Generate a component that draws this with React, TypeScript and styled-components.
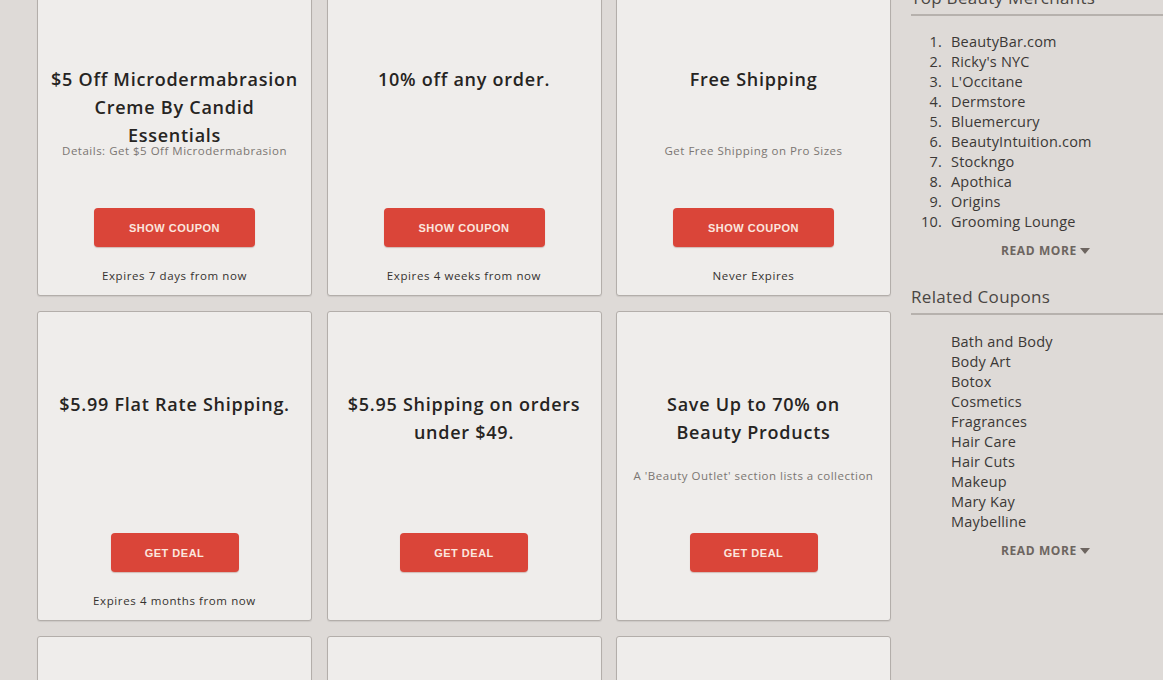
import React from "react";
import styled, { createGlobalStyle } from "styled-components";

const Global = createGlobalStyle`
  html, body { margin: 0; padding: 0; background: #dedad7; overflow: hidden; }
  body { font-family: "Open Sans", "Liberation Sans", sans-serif; }
`;

const Page = styled.div`
  display: flex;
  align-items: flex-start;
  gap: 20px;
  padding-left: 37px;
  margin-top: -14px;
  width: 1163px;
  box-sizing: border-box;
  height: 694px;
  overflow: hidden;
`;

const Grid = styled.div`
  display: grid;
  grid-template-columns: repeat(3, 275px);
  grid-auto-rows: 310px;
  column-gap: 14.5px;
  row-gap: 15px;
  flex: none;
`;

const Card = styled.div`
  box-sizing: border-box;
  background: #efedeb;
  border: 1px solid #b3aeaa;
  border-radius: 3px;
  box-shadow: 0 1px 1px rgba(0,0,0,0.08);
  display: flex;
  flex-direction: column;
  align-items: center;
  padding: 78px 4px 0;
  text-align: center;
`;

const Title = styled.div`
  height: 78px;
  font-size: 18px;
  line-height: 28px;
  font-weight: 600;
  color: #262422;
  letter-spacing: 0.75px;
  width: 100%;
  white-space: pre-line;
`;

const Details = styled.div`
  height: 65px;
  font-size: 11.5px;
  line-height: 16px;
  color: #7b7672;
  white-space: nowrap;
  letter-spacing: 0.5px;
`;

const Button = styled.div<{ $wide?: boolean }>`
  box-sizing: border-box;
  width: ${(p) => (p.$wide ? "161px" : "128px")};
  height: 39px;
  border-radius: 4px;
  background: #da4539;
  box-shadow: 0 1px 1px rgba(120,30,20,0.25);
  color: #fbe6df;
  font-family: "Liberation Sans", Arial, sans-serif;
  font-weight: 700;
  font-size: 11px;
  display: flex;
  align-items: center;
  justify-content: center;
  letter-spacing: 0.5px;
`;

const Expires = styled.div`
  margin-top: 21px;
  font-size: 11.5px;
  line-height: 16px;
  color: #35322f;
  letter-spacing: 0.6px;
`;

const Side = styled.div`
  flex: 1;
  display: flex;
  flex-direction: column;
`;

const SideHead = styled.div<{ $gap?: number }>`
  font-size: 17px;
  line-height: 24px;
  color: #4a4643;
  padding-bottom: 4px;
  border-bottom: 2px solid #b6b1ad;
  margin-top: ${(p) => p.$gap ?? 0}px;
  letter-spacing: 0.3px;
`;

const List = styled.div<{ $top: number }>`
  display: flex;
  flex-direction: column;
  margin-top: ${(p) => p.$top}px;
`;

const Item = styled.div`
  display: grid;
  grid-template-columns: 31px 1fr;
  column-gap: 9px;
  font-size: 14.5px;
  line-height: 20px;
  color: #3b3836;
  letter-spacing: 0.2px;
`;

const Num = styled.span`
  text-align: right;
`;

const ReadMore = styled.div`
  margin-top: 12px;
  padding-left: 90px;
  display: flex;
  align-items: center;
  gap: 3px;
  font-size: 12px;
  line-height: 14px;
  font-weight: 700;
  color: #6d6560;
  letter-spacing: 0.6px;
`;

const Tri = styled.span`
  width: 0;
  height: 0;
  border-left: 5px solid transparent;
  border-right: 5px solid transparent;
  border-top: 6px solid #6d6560;
`;

type C = { title: string; details?: string; btn: "coupon" | "deal"; expires?: string };

const cards: C[] = [
  { title: "$5 Off Microdermabrasion\nCreme By Candid\nEssentials", details: "Details: Get $5 Off Microdermabrasion", btn: "coupon", expires: "Expires 7 days from now" },
  { title: "10% off any order.", btn: "coupon", expires: "Expires 4 weeks from now" },
  { title: "Free Shipping", details: "Get Free Shipping on Pro Sizes", btn: "coupon", expires: "Never Expires" },
  { title: "$5.99 Flat Rate Shipping.", btn: "deal", expires: "Expires 4 months from now" },
  { title: "$5.95 Shipping on orders\nunder $49.", btn: "deal" },
  { title: "Save Up to 70% on\nBeauty Products", details: "A 'Beauty Outlet' section lists a collection", btn: "deal" },
  { title: "", btn: "deal" },
  { title: "", btn: "deal" },
  { title: "", btn: "deal" },
];

const merchants = [
  "BeautyBar.com", "Ricky's NYC", "L'Occitane", "Dermstore", "Bluemercury",
  "BeautyIntuition.com", "Stockngo", "Apothica", "Origins", "Grooming Lounge",
];

const related = [
  "Bath and Body", "Body Art", "Botox", "Cosmetics", "Fragrances",
  "Hair Care", "Hair Cuts", "Makeup", "Mary Kay", "Maybelline",
];

export default function App() {
  return (
    <>
      <Global />
      <Page>
        <Grid>
          {cards.map((c, i) => (
            <Card key={i}>
              {c.title && (
                <>
                  <Title>{c.title}</Title>
                  <Details>{c.details ?? ""}</Details>
                  <Button $wide={c.btn === "coupon"}>
                    {c.btn === "coupon" ? "SHOW COUPON" : "GET DEAL"}
                  </Button>
                  {c.expires && <Expires>{c.expires}</Expires>}
                </>
              )}
            </Card>
          ))}
        </Grid>
        <Side>
          <SideHead>Top Beauty Merchants</SideHead>
          <List $top={16}>
            {merchants.map((m, i) => (
              <Item key={m}>
                <Num>{i + 1}.</Num>
                <span>{m}</span>
              </Item>
            ))}
          </List>
          <ReadMore>READ MORE<Tri /></ReadMore>
          <SideHead $gap={27}>Related Coupons</SideHead>
          <List $top={17}>
            {related.map((m) => (
              <Item key={m}>
                <span />
                <span>{m}</span>
              </Item>
            ))}
          </List>
          <ReadMore>READ MORE<Tri /></ReadMore>
        </Side>
      </Page>
    </>
  );
}
